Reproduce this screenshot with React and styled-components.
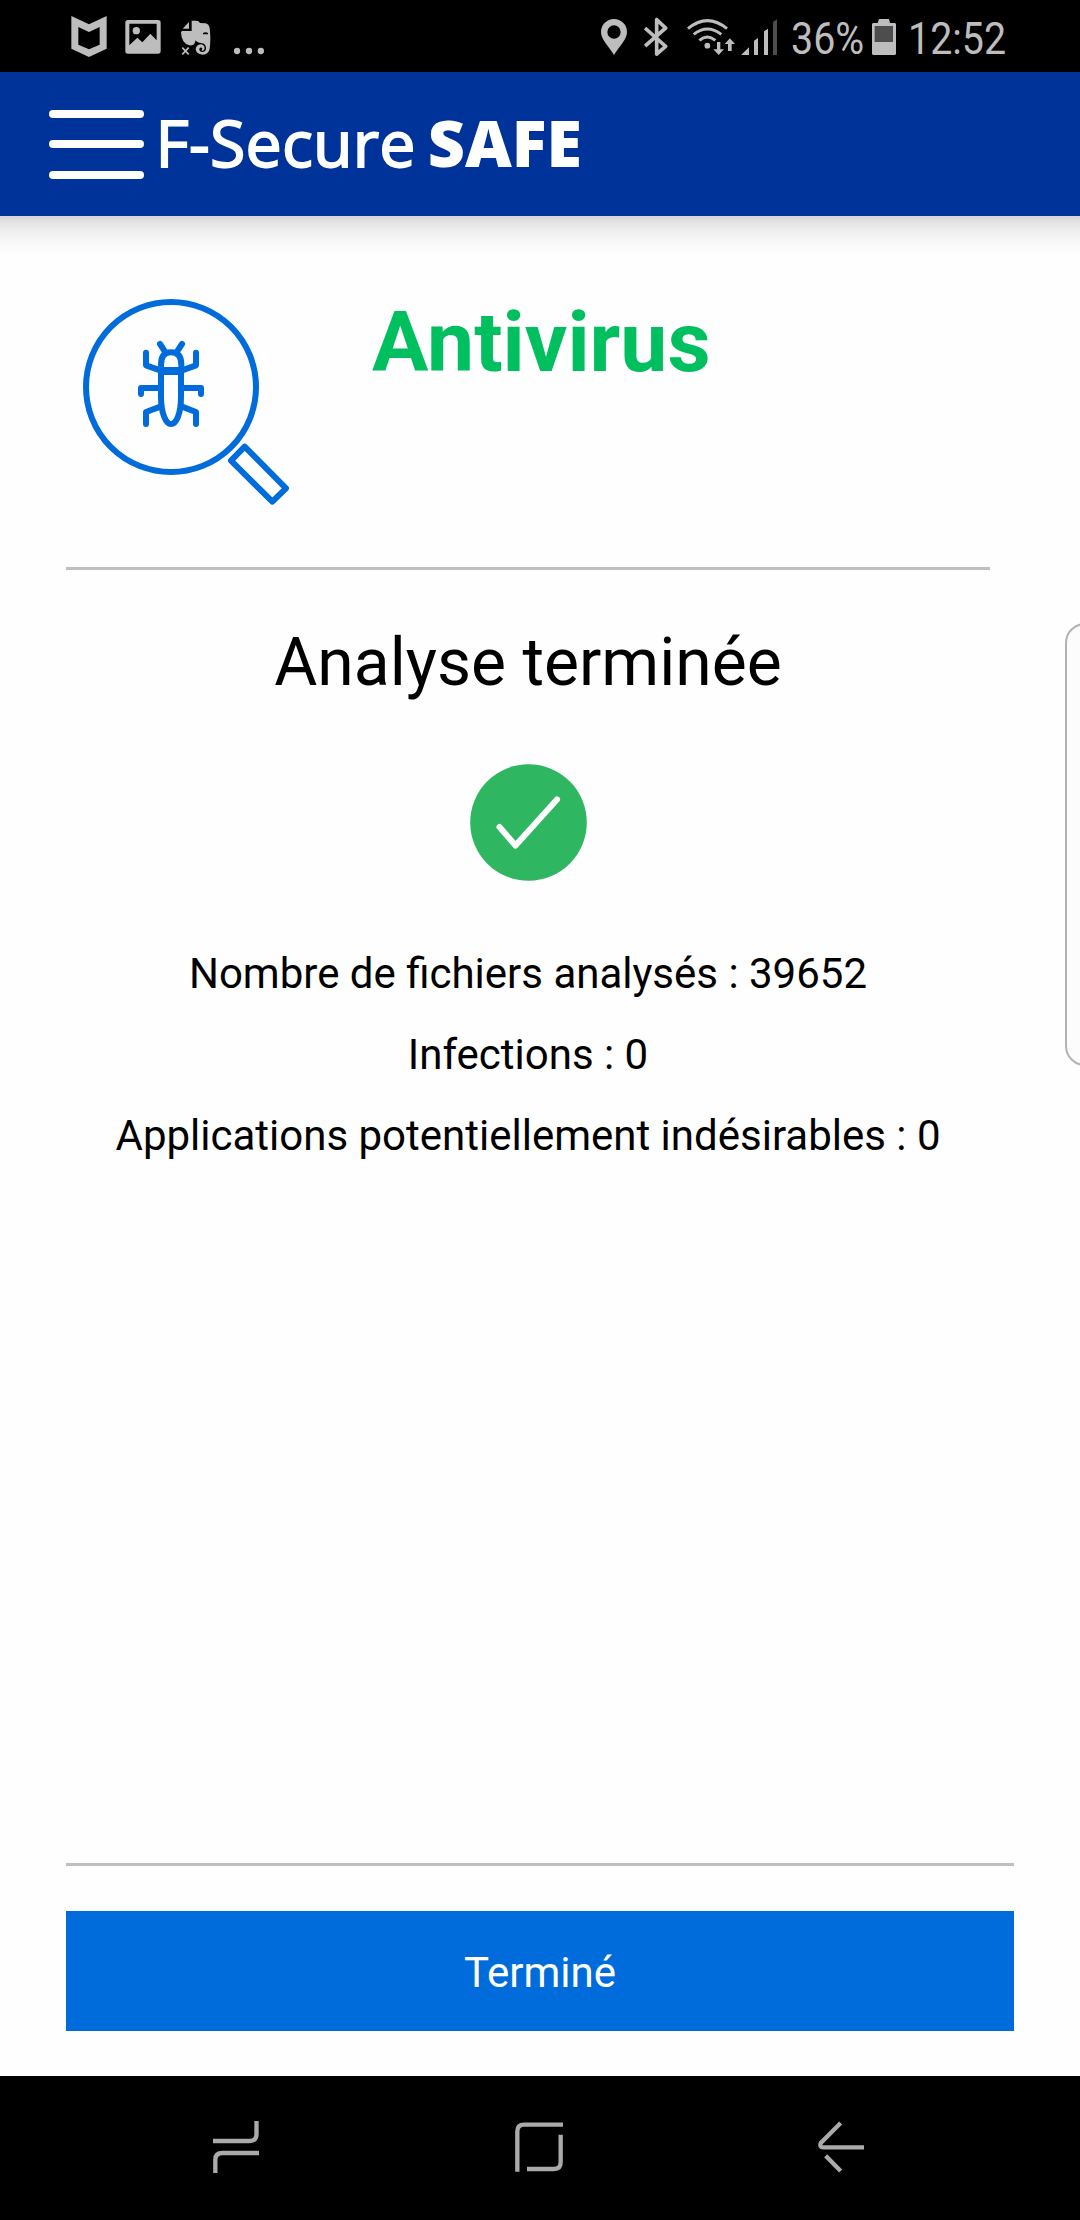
import React from "react";
import styled, { createGlobalStyle } from "styled-components";

const GlobalStyle = createGlobalStyle`
	* {
		box-sizing: border-box;
	}
	body {
		margin: 0;
		background: #fefefe;
		font-family: Roboto, "Liberation Sans", sans-serif;
	}
`;

const Screen = styled.div`
	width: 1080px;
	height: 2220px;
	display: flex;
	flex-direction: column;
	overflow: hidden;
	position: relative;
	color: #000;
`;

const StatusBar = styled.div`
	height: 72px;
	flex: none;
	display: flex;
	align-items: center;
	justify-content: space-between;
	padding: 0 71px;
	background: #000;
	color: #bdbdbd;
`;

const StatusGroup = styled.div`
	display: flex;
	align-items: center;
`;

const StatusIcon = styled.svg`
	display: block;
	height: 72px;
	width: ${(props) => props.$w}px;
	margin-left: ${(props) => props.$gap || 0}px;
	fill: currentColor;
`;

const StatusText = styled.span`
	width: ${(props) => props.$w}px;
	margin-left: ${(props) => props.$gap}px;
	font-size: 45px;
	line-height: 72px;
	padding-top: 6px;
	white-space: nowrap;
	transform: scaleX(0.875);
	transform-origin: left;
`;

const Header = styled.header`
	height: 144px;
	flex: none;
	display: flex;
	align-items: center;
	padding-left: 48.5px;
	background: #003399;
	color: #fff;
`;

const MenuButton = styled.button`
	width: 95px;
	height: 69px;
	padding: 0;
	border: none;
	background: none;
	display: flex;
	flex-direction: column;
	justify-content: space-between;

	span {
		height: 8px;
		width: 95px;
		border-radius: 4px;
		background: #fff;
	}
`;

const Brand = styled.div`
	display: flex;
	margin-left: 12px;
	padding-bottom: 4px;
	font-family: "Open Sans", "Noto Sans", sans-serif;
	font-size: 64.5px;
	line-height: 88px;
	font-weight: 400;
	letter-spacing: 0.2px;
	white-space: nowrap;
	-webkit-text-stroke: 1.8px #fff;

	strong {
		font-weight: 800;
		letter-spacing: 0;
		margin-left: 12px;
		-webkit-text-stroke: 0;
	}
`;

const HeaderShadow = styled.div`
	height: 40px;
	flex: none;
	border-top: 3px solid #dcd6dc;
	background: linear-gradient(#dedede, #ededed 28%, #f8f8f8 62%, #fefefe);
`;

const Main = styled.main`
	flex: 1;
	display: flex;
	flex-direction: column;
	padding: 24px 66px 45px;
`;

const TitleRow = styled.div`
	display: flex;
	height: 290px;
	width: 924px;
	border-bottom: 3px solid #bfbfbf;
`;

const ScanIcon = styled.svg`
	display: block;
	width: 260px;
	height: 260px;
	margin-left: -6px;
	flex: none;
	fill: none;
	stroke: #006cdb;
	stroke-width: 18;
	stroke-linecap: round;
	stroke-linejoin: round;
`;

const Title = styled.h1`
	margin: 14px 0 0 52px;
	font-size: 84px;
	line-height: 98px;
	font-weight: 700;
	color: #00bf5f;
`;

const Results = styled.section`
	width: 924px;
	flex: 1;
	display: flex;
	flex-direction: column;
	align-items: center;
	padding-top: 54px;
`;

const Heading = styled.h2`
	margin: 0;
	font-size: 66px;
	line-height: 78px;
	font-weight: 400;
`;

const CheckIcon = styled.svg`
	display: block;
	width: 117px;
	height: 117px;
	margin: 62px 0 52px;
`;

const ResultLine = styled.p`
	margin: 0;
	font-size: 42px;
	line-height: 81px;
	white-space: nowrap;
`;

const Footer = styled.footer`
	border-top: 3px solid #bfbfbf;
	padding-top: 45px;
`;

const DoneButton = styled.button`
	display: block;
	width: 100%;
	height: 120px;
	border: none;
	padding: 2px 0 0;
	background: #006cdb;
	color: #fff;
	font-family: inherit;
	font-size: 42px;
`;

const EdgeHandle = styled.div`
	position: absolute;
	top: 623px;
	left: 1065px;
	width: 40px;
	height: 443px;
	border: 2px solid #b2b2b2;
	border-radius: 21px;
	background: #fcfcfc;
`;

const NavBar = styled.nav`
	height: 144px;
	flex: none;
	display: flex;
	justify-content: space-between;
	padding: 0 216px 0 213px;
	background: #000;
`;

const NavIcon = styled.svg`
	display: block;
	width: ${(props) => props.$w}px;
	height: 144px;
	fill: none;
	stroke: #aaa;
	stroke-width: 13;
`;

const results = [
	"Nombre de fichiers analysés : 39652",
	"Infections : 0",
	"Applications potentiellement indésirables : 0",
];

function Notifications() {
	return (
		<StatusGroup>
			<StatusIcon $w={36} viewBox="63 0 108 216">
				<path fillRule="evenodd" d="M64 48L117 73L170 48V146L117 171L64 146ZM85 81V134L117 148L149 134V81L117 96Z" />
			</StatusIcon>
			<StatusIcon $w={36} $gap={18} viewBox="225 0 108 216">
				<path fillRule="evenodd" d="M234 60H324Q332 60 332 68V153Q332 161 324 161H234Q226 161 226 153V68Q226 60 234 60ZM238 71V136L262 113L277 127L301 101L320 121V71Z" />
				<circle cx="259" cy="92" r="11" />
			</StatusIcon>
			<StatusIcon $w={30} $gap={20} viewBox="393 0 90 216">
				<path d="M398 86L417 66V86Z" />
				<path d="M425 62H438Q447 62 450 69L466 70Q477 72 479 84Q483 120 479 146Q476 163 458 164Q438 163 437 148Q438 134 452 133Q463 134 464 145Q464 152 456 153Q453 151 457 146Q455 141 450 143Q446 146 449 152Q452 157 459 156Q468 154 468 143Q467 130 453 129Q440 128 437 121L434 130Q431 138 418 136Q394 130 393 96L396 93H425Z" />
				<path d="M459 99Q467 95 474 99V103H459Z" fill="#000" />
				<path d="M397 143L416 163M416 143L397 163" stroke="currentColor" strokeWidth="5" />
			</StatusIcon>
			<StatusIcon $w={30} $gap={23} viewBox="552 0 90 216">
				<circle cx="561" cy="153" r="9.5" />
				<circle cx="597" cy="153" r="9.5" />
				<circle cx="632.5" cy="153" r="9.5" />
			</StatusIcon>
		</StatusGroup>
	);
}

function SystemStatus() {
	return (
		<StatusGroup>
			<StatusIcon $w={26} viewBox="63 0 78 216">
				<path fillRule="evenodd" d="M102 57A39 39 0 0 1 141 96C141 118 118 139 102 165C86 139 63 118 63 96A39 39 0 0 1 102 57ZM102 76A20 20 0 1 0 102 116A20 20 0 1 0 102 76Z" />
			</StatusIcon>
			<StatusIcon $w={24} $gap={17} viewBox="191 0 72 216">
				<path d="M194 84L256 139L229 162V59L256 84L194 138" fill="none" stroke="currentColor" strokeWidth="11" strokeLinejoin="round" />
			</StatusIcon>
			<StatusIcon $w={48} $gap={19} viewBox="318 0 144 216">
				<path d="M321 86Q379 38 438 86M338 103Q379 71 421 103M355 121Q379 101 403 121" fill="none" stroke="currentColor" strokeWidth="9" />
				<circle cx="379" cy="137" r="8.5" />
				<path d="M408 126H418V148H429L413 165L397 148H408ZM441 153V132H431L446.500 115L462 132H452V153Z" />
			</StatusIcon>
			<StatusIcon $w={36} $gap={6} viewBox="480 0 108 216">
				<path d="M480 165L504 142V165ZM519 165V122L531 114V165ZM549 165V94L561 86V165Z" />
				<path d="M576 165V66L588 58V165Z" fill="#4d4d4d" />
			</StatusIcon>
			<StatusText $w={80} $gap={14}>36%</StatusText>
			<StatusIcon $w={24} $gap={1} viewBox="303 0 72 216">
				<path d="M306 69H320L324 57H354L357 69H372L375 72V162L372 165H306L303 162V72Z" />
				<path d="M311 78H366V126H311Z" fill="#4d4d4d" />
			</StatusIcon>
			<StatusText $w={101} $gap={12}>12:52</StatusText>
		</StatusGroup>
	);
}

function App() {
	return (
		<>
			<GlobalStyle />
			<Screen>
				<StatusBar>
					<Notifications />
					<SystemStatus />
				</StatusBar>
				<Header>
					<MenuButton aria-label="Menu">
						<span />
						<span />
						<span />
					</MenuButton>
					<Brand>
						F-Secure <strong>SAFE</strong>
					</Brand>
				</Header>
				<HeaderShadow />
				<Main>
					<TitleRow>
						<ScanIcon viewBox="0 0 780 780">
							<circle cx="333" cy="321" r="255" />
							<path d="M554 500L678 625L637 665L513 542Z" />
							<path d="M303 266V254Q303 217 333 217Q364 217 364 254V266" />
							<path d="M303 273V350C303 400 318 432 333 432C349 432 363 400 363 350V273" />
							<path d="M303 273H363" strokeWidth="24" strokeLinecap="butt" />
							<path d="M300 192L317 218M366 192L349 218" />
							<path d="M258 218V256L303 272M408 218V256L364 272" />
							<path d="M243 342V324H303M423 342V324H364" />
							<path d="M258 432V396L303 379M408 432V396L364 379" />
						</ScanIcon>
						<Title>Antivirus</Title>
					</TitleRow>
					<Results>
						<Heading>Analyse terminée</Heading>
						<CheckIcon viewBox="0 0 117 117">
							<circle cx="58.500" cy="58.500" r="58.300" fill="#2fb660" />
							<path d="M29.500 63L45.500 81.500L87 35.500" fill="none" stroke="#fff" strokeWidth="6" strokeLinecap="round" strokeLinejoin="round" />
						</CheckIcon>
						{results.map((line) => (
							<ResultLine key={line}>{line}</ResultLine>
						))}
					</Results>
					<Footer>
						<DoneButton>Terminé</DoneButton>
					</Footer>
				</Main>
				<NavBar>
					<NavIcon $w={46} viewBox="69 -42 138 432">
						<path d="M199.500 93V133Q199.500 153 179 153H69M207 189H97Q76 189 76 209V249" />
					</NavIcon>
					<NavIcon $w={48} viewBox="972 -42 144 432">
						<path d="M979 245V124Q979 104 999 104H1116M1109 134V217Q1109 237 1089 237H1008" />
					</NavIcon>
					<NavIcon $w={46} viewBox="114 48 138 432">
						<path d="M182 189L123 248Q117 262 130 262H252M137 287L182 333" />
					</NavIcon>
				</NavBar>
				<EdgeHandle />
			</Screen>
		</>
	);
}

export default App;
